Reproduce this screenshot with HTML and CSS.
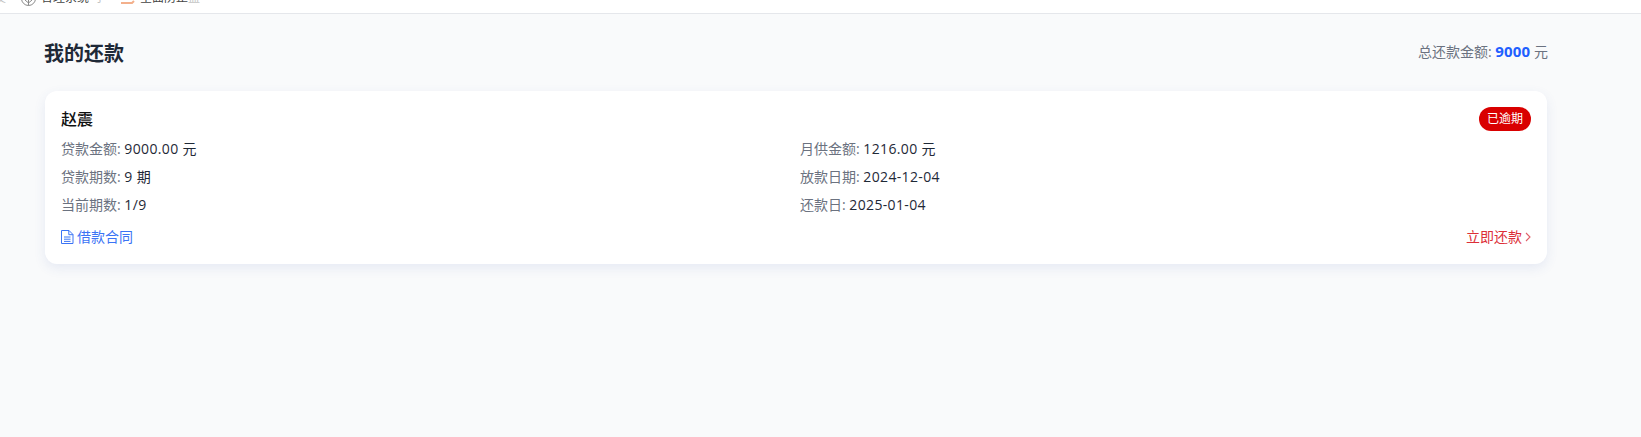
FILE: index.html
```html
<!DOCTYPE html>
<html lang="zh-CN">
<head>
    <meta charset="UTF-8">
    <meta name="viewport" content="width=device-width, initial-scale=1.0">
    <title>我的还款</title>
    <link rel="stylesheet" href="styles.css">
</head>
<body>
    <div class="topbar">
        <span class="topbar-faint">发</span>
        <div class="topbar-item">
            <svg width="15" height="15" viewBox="0 0 15 15" fill="none" stroke="#8a8a8a"><circle cx="7.5" cy="7.5" r="7"/><path d="M7.5 .5v14M4 9l3.5 3 3.5-3"/></svg>
            <span>合理系统</span>
            <span class="topbar-faint">字</span>
        </div>
        <div class="topbar-item">
            <svg width="14" height="15" viewBox="0 0 14 15" fill="none" stroke="#f3b08c" stroke-width="2"><path d="M0 12h11l2-2"/></svg>
            <span>全面防止<span class="topbar-faint">盗</span></span>
        </div>
    </div>
    <div class="page">
        <div class="page-head">
            <h1>我的还款</h1>
            <div class="total">总还款金额: <b>9000</b> 元</div>
        </div>
        <div class="card">
            <div class="card-head">
                <div class="name">赵震</div>
                <div class="badge">已逾期</div>
            </div>
            <div class="info">
                <div><span class="label">贷款金额:</span> <span class="value">9000.00 元</span></div>
                <div><span class="label">月供金额:</span> <span class="value">1216.00 元</span></div>
                <div><span class="label">贷款期数:</span> <span class="value">9 期</span></div>
                <div><span class="label">放款日期:</span> <span class="value">2024-12-04</span></div>
                <div><span class="label">当前期数:</span> <span class="value">1/9</span></div>
                <div><span class="label">还款日:</span> <span class="value">2025-01-04</span></div>
            </div>
            <div class="card-foot">
                <a class="contract" href="#">
                    <svg width="14" height="14" viewBox="0 0 14 14" fill="none" stroke="#3b74f5" stroke-width="1"><path d="M.5 .5h7.5L12 4.5v9H.5z"/><path d="M7.8 .5v4.2H12M3 7h6.5M3 9.2h6.5M3 11.4h6.5"/></svg>
                    借款合同
                </a>
                <a class="repay" href="#">
                    立即还款
                    <svg width="6" height="10" viewBox="0 0 6 10" fill="none" stroke="#e0606a" stroke-width="1.1"><path d="M1 1l4 4-4 4"/></svg>
                </a>
            </div>
        </div>
    </div>
</body>
</html>
```

FILE: styles.css
```css
body {
    font-family: "Open Sans", "Noto Sans CJK SC", sans-serif;
    background-color: #f9fafb;
    color: #1f2937;
    margin: 0;
    min-height: 437px;
}
a {
    text-decoration: none;
}
.topbar {
    height: 14px;
    box-sizing: border-box;
    background-color: #fff;
    border-bottom: 1px solid #e5e7eb;
    display: flex;
    align-items: flex-end;
    gap: 15px;
    padding-bottom: 7px;
    overflow: hidden;
    font-size: 12px;
    line-height: 16px;
    color: #444;
}
.topbar > .topbar-faint {
    margin-left: -6px;
}
.topbar-faint {
    color: #c4c4c4;
}
.topbar-item {
    display: flex;
    align-items: center;
    gap: 5px;
    flex-shrink: 0;
}
.page {
    width: 1504px;
    margin-left: 44px;
    padding-top: 26px;
}
.page-head {
    display: flex;
    justify-content: space-between;
    align-items: flex-start;
}
h1 {
    font-size: 20px;
    line-height: 28px;
    font-weight: 700;
    margin: 0;
}
.total {
    font-size: 14px;
    line-height: 22px;
    color: #6b7280;
}
.total b {
    font-size: 15px;
    letter-spacing: 0.2px;
    color: #1f5fff;
}
.card {
    margin: 23px 0 0 1px;
    width: 1502px;
    box-sizing: border-box;
    background-color: #fff;
    border-radius: 12px;
    box-shadow: 0 4px 12px rgba(59, 90, 180, 0.1);
    padding: 16px 16px 17px;
    font-size: 14px;
    line-height: 20px;
}
.card-head {
    display: flex;
    justify-content: space-between;
    align-items: center;
}
.name {
    font-size: 16px;
    font-weight: 500;
    color: #111;
}
.badge {
    background-color: #d90000;
    color: #fff;
    font-size: 12px;
    line-height: 16px;
    padding: 4px 8px;
    border-radius: 12px;
}
.info {
    display: grid;
    grid-template-columns: 1fr 1fr;
    column-gap: 8px;
    row-gap: 8px;
    margin-top: 8px;
}
.label {
    color: #6b7280;
}
.value {
    letter-spacing: 0.35px;
}
.card-foot {
    display: flex;
    justify-content: space-between;
    align-items: center;
    margin-top: 12px;
    font-size: 14px;
}
.contract {
    color: #3b74f5;
    display: flex;
    align-items: center;
    gap: 2px;
}
.repay {
    color: #dc2f37;
    display: flex;
    align-items: center;
    gap: 3px;
}
```
